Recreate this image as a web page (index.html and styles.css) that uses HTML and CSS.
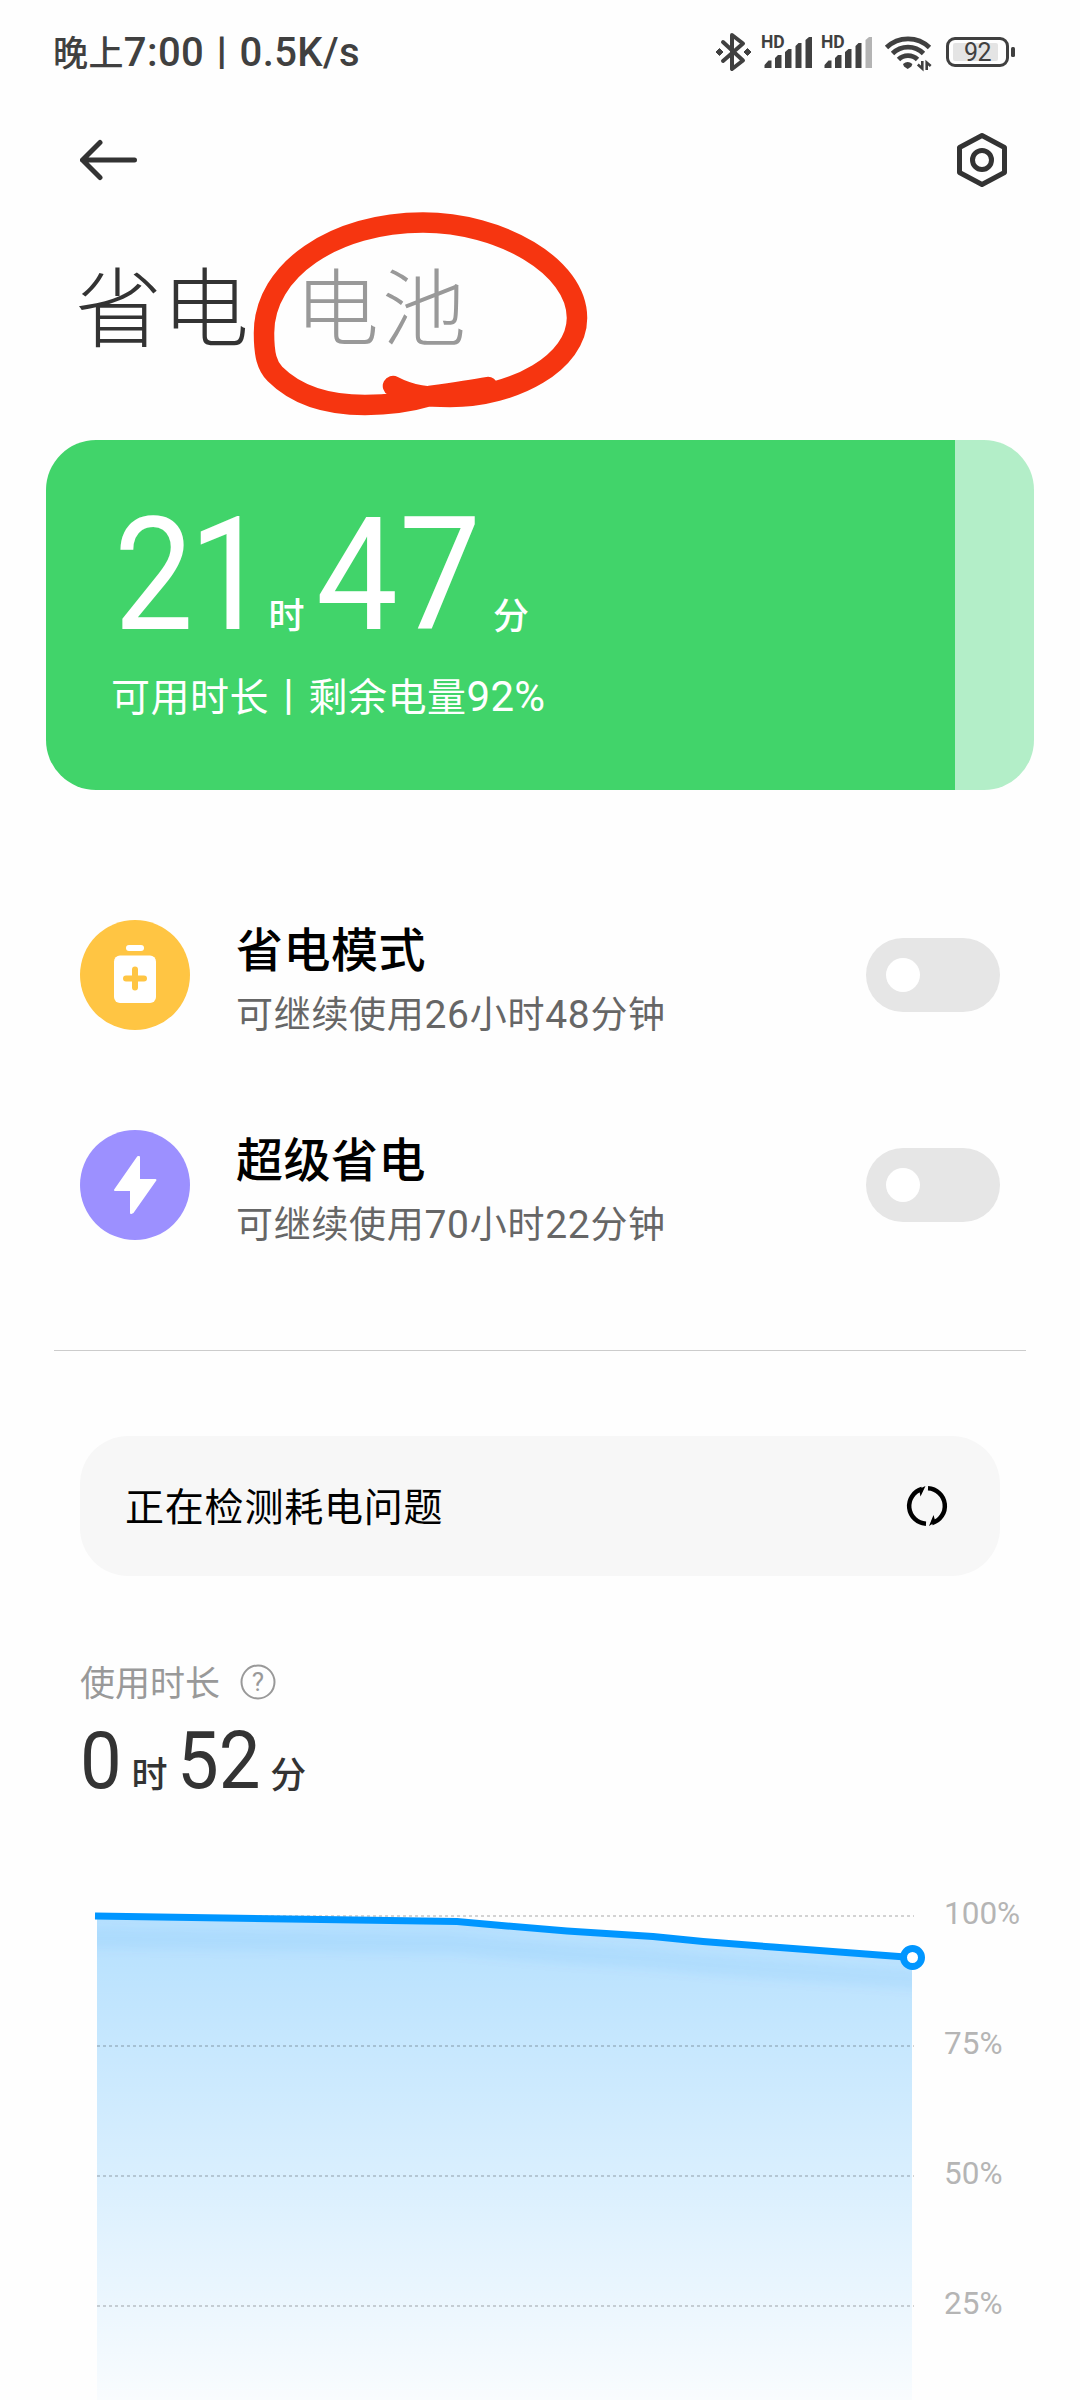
FILE: index.html
```html
<!DOCTYPE html>
<html lang="zh-CN">
	<head>
		<meta charset="UTF-8">
		<title>省电与电池</title>
		<link rel="stylesheet" href="styles.css">
	</head>
	<body>
		<div class="status">
			<div class="status-text"><span class="cjk">晚上</span>7:00<span class="cjk bar">丨</span>0.5K/s</div>
			<svg class="status-icons" width="304" height="48" viewBox="712 28 304 48">
				<!-- 蓝牙 -->
				<g fill="none" stroke="#404040" stroke-width="4" stroke-linejoin="round" stroke-linecap="round">
					<path d="M723 42l20 18.500l-11 8.500V35l11 8.500L723 61"/>
				</g>
				<path d="M716 52l3.500-3.500l3.500 3.500l-3.500 3.500zM744 52l3.500-3.500l3.500 3.500l-3.500 3.500z" fill="#404040" stroke="#404040" stroke-linejoin="round"/>
				<!-- 信号 -->
				<text class="hd" x="761" y="48">HD</text>
				<path class="ink" d="M764.500 68v-3l4-4.500h3V68zM775 68V58l3-3h3.500v13zM785 68V52l3.500-3h3v19zM795.500 68V46l3-3h3v25zM805.500 68V40l3.500-3h3v31z"/>
				<text class="hd" x="821" y="48">HD</text>
				<path class="ink" d="M824.500 68v-3l4-4.500h3V68zM835 68V58l3-3h3.500v13zM845 68V52l3.500-3h3v19zM855.500 68V46l3-3h3v25z"/>
				<path d="M865.500 68V40l3.500-3h3v31z" fill="#b4b4b4"/>
				<!-- wifi -->
				<g fill="none" stroke="#404040" stroke-width="4.800">
					<path d="M886.500 47.500a31 31 0 0 1 43 0"/>
					<path d="M892.500 53.500a22 22 0 0 1 31 0"/>
					<path d="M898.500 59.500a13.500 13.500 0 0 1 19 0"/>
				</g>
				<path class="ink" d="M903 64q4.700-4 9.400 0l-1 2.500l-3.700 2.500l-3.700-2.500z"/>
				<path d="M922.300 61v7.500l-4.500-4M926.700 70v-7.500l4 3.500" fill="none" stroke="#404040" stroke-width="2.600"/>
				<!-- 电池 -->
				<rect x="947.500" y="38.500" width="60" height="27" rx="7.500" fill="none" stroke="#404040" stroke-width="3"/>
				<rect x="953" y="43" width="45" height="18" rx="2" fill="#e4e4e4"/>
				<rect class="ink" x="1011" y="47" width="4" height="10" rx="1.500"/>
				<text class="level" x="964" y="61">92</text>
			</svg>
		</div>

		<div class="navbar">
			<svg width="60" height="44" viewBox="0 0 60 44" fill="none" stroke="#333" stroke-width="5" stroke-linecap="round" stroke-linejoin="round">
				<path d="M54.500 22H2.500M20 4.500L2.500 22L20 39.500"/>
			</svg>
			<svg width="54" height="58" viewBox="0 0 54 58" fill="none" stroke="#333" stroke-width="5">
				<path d="M27 4.500L49.500 16.500V41.500L27 53.500L4.500 41.500V16.500z" stroke-linejoin="round"/>
				<circle cx="27" cy="29" r="9.500"/>
			</svg>
		</div>

		<div class="tabs">
			<span class="tab active">省电</span>
			<span class="tab">电池</span>
			<svg class="mark" width="360" height="220" viewBox="240 205 360 220">
				<path d="M393 386C412 396 428 397 450 397C515 397 577 362 577 318C577 266 500 222.500 423 222.500C335 222.500 264 270 264 333C264 355 267 366 275 374C300 399 335 405 365 405C390 405 410 402 430 396C450 393 470 390 488 387"/>
			</svg>
		</div>

		<div class="card">
			<div class="time"><b class="hour">21</b><i class="h">时</i><b class="min">47</b><i class="m">分</i></div>
			<div class="desc">可用时长丨剩余电量<span class="num">92%</span></div>
		</div>

		<ul class="modes">
			<li>
				<svg class="mode-icon" width="110" height="110" viewBox="0 0 110 110">
					<circle cx="55" cy="55" r="55" fill="#ffc543"/>
					<rect x="46" y="25" width="18" height="6" rx="3" fill="#fff"/>
					<rect x="34" y="35.500" width="42" height="47.500" rx="6" fill="#fff"/>
					<path d="M55 49.500v18M46 58.500h18" stroke="#ffc543" stroke-width="6" stroke-linecap="round"/>
				</svg>
				<div class="mode-text">
					<h3>省电模式</h3>
					<p>可继续使用<span class="num">26</span>小时<span class="num">48</span>分钟</p>
				</div>
				<div class="switch"></div>
			</li>
			<li>
				<svg class="mode-icon" width="110" height="110" viewBox="0 0 110 110">
					<circle cx="55" cy="55" r="55" fill="#9c90ff"/>
					<path d="M58 27L35 60H51V83L53 82L75.500 50H59V27z" fill="#fff" stroke="#fff" stroke-width="2" stroke-linejoin="round"/>
				</svg>
				<div class="mode-text">
					<h3>超级省电</h3>
					<p>可继续使用<span class="num">70</span>小时<span class="num">22</span>分钟</p>
				</div>
				<div class="switch"></div>
			</li>
		</ul>

		<div class="check">
			<span>正在检测耗电问题</span>
			<svg width="44" height="44" viewBox="0 0 44 44">
				<g fill="none" stroke="#000" stroke-width="4.500">
					<path d="M21 39.700A17.700 17.700 0 0 1 17 5"/>
					<path d="M23 4.300A17.700 17.700 0 0 1 27 39"/>
				</g>
				<path d="M20.500 2L15.500 12.500L14 5zM24 42L28.500 31L30.500 38z"/>
			</svg>
		</div>

		<div class="usage">
			<div class="usage-label"><span>使用时长</span>
				<svg width="36" height="36" viewBox="0 0 36 36">
					<circle cx="18" cy="18" r="16.500" fill="none" stroke="#999" stroke-width="2"/>
					<text x="18" y="27" text-anchor="middle">?</text>
				</svg>
			</div>
			<div class="usage-time"><b>0</b><i class="h">时</i><b>52</b><i class="m">分</i></div>
		</div>

		<div class="chart">
			<svg width="850" height="504" viewBox="80 1896 850 504">
				<defs>
					<linearGradient id="fill" gradientUnits="userSpaceOnUse" x1="0" y1="1916" x2="0" y2="2436">
						<stop offset="0" stop-color="#0096ff" stop-opacity=".29"/>
						<stop offset="1" stop-color="#0096ff" stop-opacity="0"/>
					</linearGradient>
					<clipPath id="area">
						<path d="M97 1916L457 1921.500L507 1926L567 1931L653 1936.500L703 1941.500L773 1947L912 1957V2400H97z"/>
					</clipPath>
					<filter id="soft" x="-5%" y="-100%" width="110%" height="300%">
						<feGaussianBlur stdDeviation="5"/>
					</filter>
				</defs>
				<g clip-path="url(#area)">
					<rect x="97" y="1900" width="815" height="500" fill="url(#fill)"/>
					<path d="M60 1938L457 1944L507 1949L567 1954L653 1959.500L703 1964.500L773 1970L950 1982" fill="none" stroke="#0078f0" stroke-opacity=".06" stroke-width="20" filter="url(#soft)"/>
				</g>
				<path d="M97 1916H914M97 2046H914M97 2176H914M97 2306H914" stroke="#000" stroke-opacity=".17" stroke-width="2" stroke-dasharray="3 3"/>
				<path d="M95 1916L457 1921.500L507 1926L567 1931L653 1936.500L703 1941.500L773 1947L912 1957.500" fill="none" stroke="#0096ff" stroke-width="7" stroke-linejoin="round"/>
				<circle cx="912.500" cy="1957.500" r="9" fill="#fff" stroke="#0096ff" stroke-width="7"/>
			</svg>
			<div class="scale">
				<span>100%</span>
				<span>75%</span>
				<span>50%</span>
				<span>25%</span>
			</div>
		</div>
	</body>
</html>
```
FILE: styles.css
```css
*{
	margin: 0;
	padding: 0;
	box-sizing: border-box;
}
html, body{
	height: 2400px;
	overflow: hidden;
}
body{
	width: 1080px;
	background-color: #fefefe;
	font-family: "Noto Sans CJK SC", sans-serif;
	color: #333;
}
svg{
	display: block;
	flex: none;
}
b, i, h3{
	font-weight: 500;
	font-style: normal;
}
b, .num{
	font-family: Roboto, sans-serif;
}

.status{
	display: flex;
	justify-content: space-between;
	align-items: center;
	height: 104px;
	padding: 0 64px 0 53px;
}
.status-text{
	padding-top: 4px;
	font: 500 40px/60px Roboto, "Noto Sans CJK SC", sans-serif;
	letter-spacing: 0.4px;
	color: #404040;
	white-space: nowrap;
}
.status-text .cjk{
	font-size: 35px;
}
.ink{
	fill: #404040;
}
.hd{
	font: 700 17.5px Roboto, sans-serif;
	fill: #404040;
}
.level{
	font: 400 25px Roboto, sans-serif;
	letter-spacing: -0.5px;
	fill: #404040;
}

.navbar{
	display: flex;
	justify-content: space-between;
	align-items: center;
	height: 112px;
	padding: 0 71px 0 80px;
}

.tabs{
	position: relative;
	display: flex;
	gap: 46px;
	height: 224px;
	padding-left: 75px;
	line-height: 174px;
}
.tab{
	font-size: 84px;
	font-weight: 200;
	letter-spacing: 3px;
	color: #999;
}
.tab.active{
	font-size: 87px;
	font-weight: 300;
	letter-spacing: 0;
	color: #333;
}
.mark{
	position: absolute;
	left: 240px;
	top: -11px;
}
.mark path{
	fill: none;
	stroke: #f63510;
	stroke-width: 20.5;
	stroke-linecap: round;
	stroke-linejoin: round;
}

.card{
	height: 350px;
	margin: 0 46px;
	padding: 50px 0 0 65px;
	border-radius: 50px;
	background: linear-gradient(to right, #41d46a 92%, #b3eec8 92%);
	color: #fff;
}
/* 数字压窄一点 */
.time b, .usage-time b{
	display: inline-block;
	transform: scaleX(0.9);
	transform-origin: left center;
}
.time{
	height: 170px;
	padding-left: 3px;
	line-height: 170px;
	white-space: nowrap;
}
.time b{
	font-size: 157px;
	font-weight: 450;
}
.time .hour{
	letter-spacing: -5px;
}
.time .min{
	letter-spacing: 1px;
	transform: scaleX(0.93);
}
.time i{
	font-size: 36px;
}
.time .h{
	margin: 0 11px 0 -12px;
}
.time .m{
	margin-left: -1px;
}
.desc{
	height: 60px;
	margin-top: 4px;
	font-size: 39px;
	line-height: 60px;
	letter-spacing: 0.5px;
}
.desc .num{
	font-size: 42px;
	letter-spacing: 0.3px;
}

.modes{
	margin: 80px 54px 0;
	padding: 0 26px 60px;
	border-bottom: 1px solid #ccc;
	list-style: none;
}
.modes li{
	display: flex;
	align-items: center;
	height: 210px;
}
.mode-text{
	flex: 1;
	margin-left: 46px;
	padding-top: 7px;
}
.mode-text h3{
	font-size: 47px;
	line-height: 68px;
	letter-spacing: 0.5px;
	color: #000;
}
.mode-text p{
	margin-top: 2px;
	font-size: 37px;
	line-height: 58px;
	letter-spacing: 0.7px;
	color: #666;
}
.mode-text .num{
	font-size: 39px;
}
.switch{
	width: 134px;
	height: 74px;
	padding: 20px;
	border-radius: 37px;
	background-color: #e6e6e6;
}
.switch::before{
	content: "";
	display: block;
	width: 34px;
	height: 34px;
	border-radius: 50%;
	background-color: #fff;
}

.check{
	display: flex;
	justify-content: space-between;
	align-items: center;
	height: 140px;
	margin: 85px 80px 0;
	padding: 0 51px 0 45px;
	border-radius: 48px;
	background-color: #f7f7f7;
	font-size: 39px;
	letter-spacing: 0.8px;
	color: #000;
}
.check span{
	padding-bottom: 4px;
}

.usage{
	margin: 80px 80px 0;
}
.usage-label{
	display: flex;
	align-items: center;
	gap: 20px;
	height: 52px;
	font-size: 35px;
	color: #999;
}
.usage-label span{
	padding-bottom: 3px;
}
.usage-label text{
	font: 400 26px Roboto, sans-serif;
	fill: #999;
}
.usage-time{
	height: 104px;
	padding-top: 1px;
	line-height: 104px;
	white-space: nowrap;
}
.usage-time b{
	font-size: 79px;
	font-weight: 450;
	transform: scaleX(0.94);
}
.usage-time i{
	font-size: 36px;
}
.usage-time .h{
	margin: 0 10px 0 7px;
}
.usage-time .m{
	margin-left: 4px;
}

.chart{
	display: flex;
	margin: 84px 0 0 80px;
}
.scale{
	display: flex;
	flex-direction: column;
	padding: 1px 0 0 14px;
}
.scale span{
	height: 130px;
	font: 400 31.5px/34px Roboto, sans-serif;
	color: #b5b5b5;
}
```
